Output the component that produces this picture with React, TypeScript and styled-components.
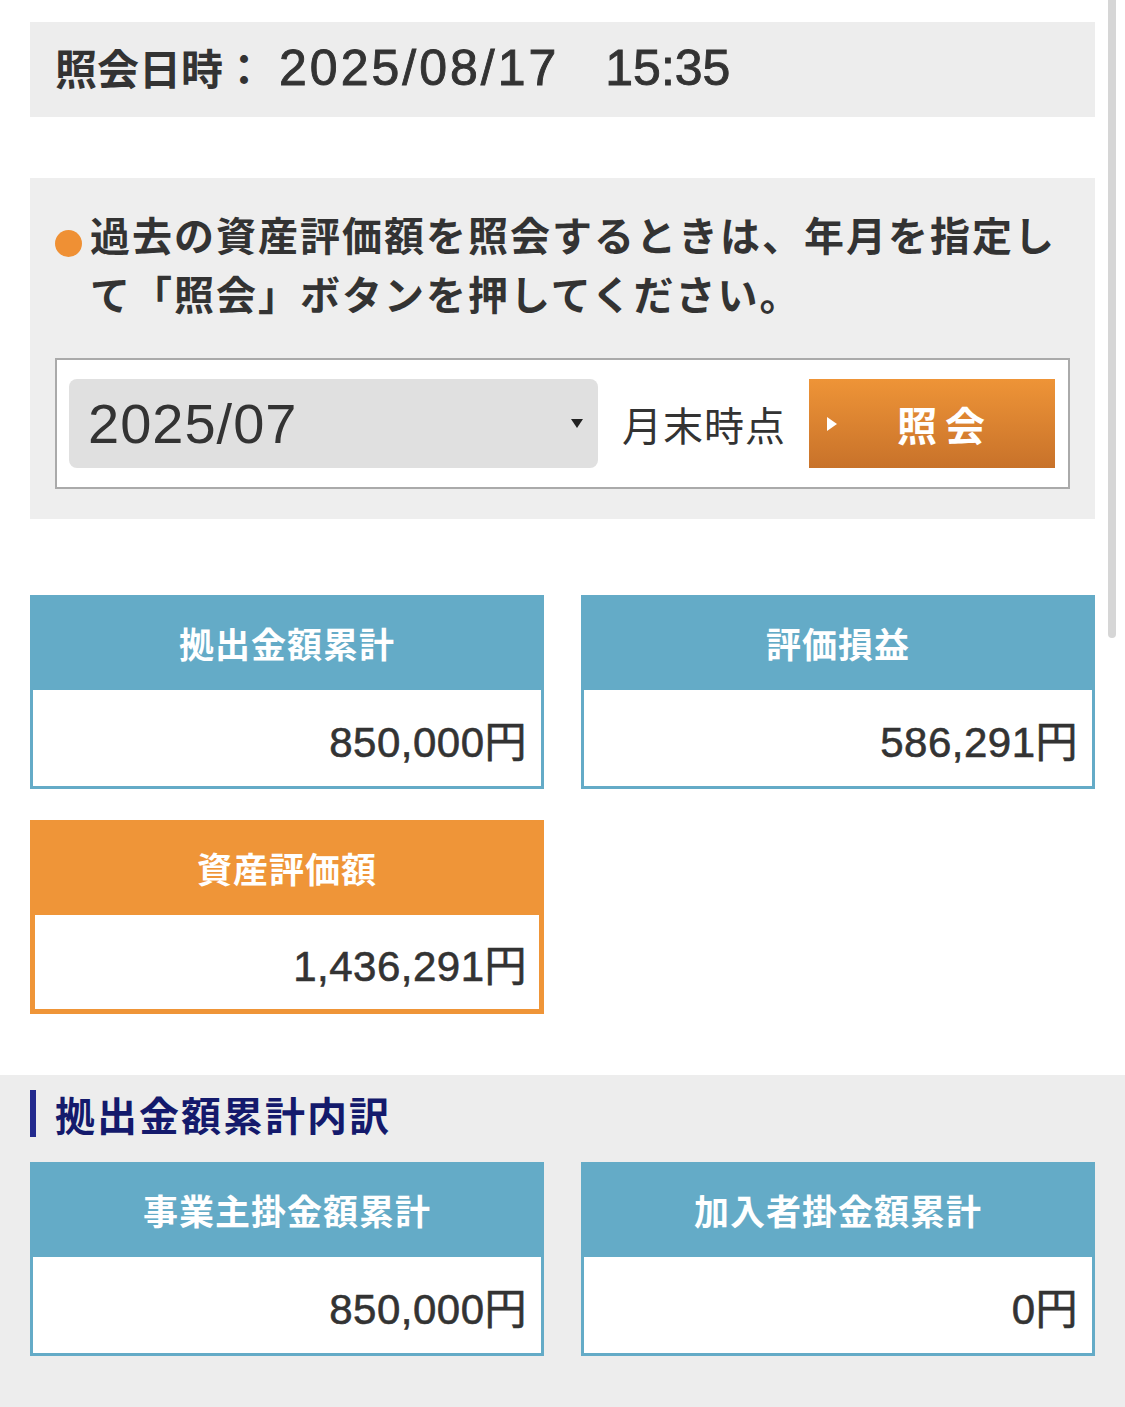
import React, { FC } from 'react';
import styled, { createGlobalStyle } from 'styled-components';

const GlobalStyle = createGlobalStyle`
  body {
    margin: 0;
    background: #fff;
    color: #333;
    font-family: "Liberation Sans", "Noto Sans CJK JP", sans-serif;
  }
`;

const Page = styled.div`
  padding-top: 22px;
`;

const Top = styled.div`
  padding: 0 30px;
`;

const DateBar = styled.div`
  align-items: center;
  background: #ededed;
  display: flex;
  height: 95px;
  padding-left: 25px;
`;

const DateText = styled.div`
  line-height: 1;
  margin-top: -3px;
  white-space: pre;
`;

const DateLabel = styled.span`
  font-size: 42px;
  font-weight: 700;
`;

const DateValue = styled.span<{ $gap?: number; $spacing?: number }>`
  font-size: 50px;
  letter-spacing: ${({ $spacing = 0 }) => $spacing}px;
  margin-left: ${({ $gap = 0 }) => $gap}px;
  -webkit-text-stroke: 0.9px #333;
`;

const Notice = styled.div`
  background: #eeeeee;
  margin-top: 61px;
  padding: 30px 25px 30px;
`;

const NoticeRow = styled.div`
  display: flex;
  align-items: flex-start;
`;

const Bullet = styled.span`
  background: #ef9034;
  border-radius: 50%;
  flex: 0 0 27px;
  height: 27px;
  margin: 22px 8px 0 0;
`;

const NoticeText = styled.p`
  font-size: 40px;
  font-weight: 700;
  letter-spacing: 2px;
  line-height: 59px;
  margin: 0;
`;

const Form = styled.div`
  align-items: center;
  background: #fff;
  border: 2px solid #aaa;
  display: flex;
  margin-top: 32px;
  padding: 19px 13px 19px 12px;
`;

const Select = styled.div`
  align-items: center;
  background: #e0e0e0;
  border-radius: 8px;
  box-sizing: border-box;
  display: flex;
  flex: 0 0 529px;
  font-size: 56px;
  height: 89px;
  justify-content: space-between;
  letter-spacing: 1px;
  padding: 0 15px 0 19px;
`;

const Caret = styled.span`
  border-left: 6px solid transparent;
  border-right: 6px solid transparent;
  border-top: 9px solid #222;
  height: 0;
  width: 0;
`;

const Suffix = styled.span`
  font-size: 40px;
  letter-spacing: 1px;
  margin: 0 23px 0 24px;
  white-space: nowrap;
`;

const Button = styled.button`
  align-items: center;
  background: linear-gradient(#ee9437, #c8722a);
  border: 0;
  color: #fff;
  display: flex;
  flex: 1;
  font-family: inherit;
  font-size: 40px;
  font-weight: 700;
  height: 89px;
  justify-content: center;
  letter-spacing: 8px;
  padding: 0 0 0 26px;
  position: relative;

  &::before {
    border-bottom: 7px solid transparent;
    border-left: 10px solid #fff;
    border-top: 7px solid transparent;
    content: '';
    left: 18px;
    position: absolute;
    top: 38px;
  }
`;

const Grid = styled.div`
  display: grid;
  gap: 31px 37px;
  grid-template-columns: 1fr 1fr;
  margin-top: 76px;
`;

const Card = styled.div<{ $color: string; $border: number }>`
  display: flex;
  flex-direction: column;

  --c: ${({ $color }) => $color};
  --b: ${({ $border }) => $border}px;
`;

const CardHead = styled.div`
  align-items: center;
  background: var(--c);
  color: #fff;
  display: flex;
  font-size: 35px;
  font-weight: 700;
  height: 95px;
  justify-content: center;
  letter-spacing: 1px;
`;

const CardBody = styled.div`
  align-items: center;
  background: #fff;
  border: var(--b) solid var(--c);
  border-top: 0;
  box-sizing: border-box;
  display: flex;
  font-size: 42px;
  height: 99px;
  justify-content: flex-end;
  letter-spacing: 0.5px;
  padding-right: calc(17px - var(--b));
  -webkit-text-stroke: 0.6px #333;
`;

const Section = styled.section`
  background: #ededed;
  margin-top: 61px;
  padding: 15px 30px 51px;
`;

const SectionTitle = styled.h2`
  align-items: center;
  border-left: 6px solid #232a8e;
  color: #141a6c;
  display: flex;
  font-size: 40px;
  font-weight: 700;
  height: 47px;
  letter-spacing: 2px;
  margin: 0;
  padding-left: 19px;
`;

const SectionGrid = styled(Grid)`
  margin-top: 25px;
`;

const Scrollbar = styled.div`
  background: #d6d6d6;
  border-radius: 0 0 4px 4px;
  height: 638px;
  position: fixed;
  right: 9px;
  top: 0;
  width: 8px;
`;

const BLUE = '#64abc7';
const ORANGE = '#ef9538';

type Item = { label: string; value: string; color?: string; border?: number };

const ValueCard: FC<Item> = ({ label, value, color = BLUE, border = 3 }) => (
  <Card $color={color} $border={border}>
    <CardHead>{label}</CardHead>
    <CardBody>{value}</CardBody>
  </Card>
);

const summary: Item[] = [
  { label: '拠出金額累計', value: '850,000円' },
  { label: '評価損益', value: '586,291円' },
  { label: '資産評価額', value: '1,436,291円', color: ORANGE, border: 5 },
];

const breakdown: Item[] = [
  { label: '事業主掛金額累計', value: '850,000円' },
  { label: '加入者掛金額累計', value: '0円' },
];

const App: FC = () => (
  <>
    <GlobalStyle />
    <Page>
      <Top>
        <DateBar>
          <DateText>
            <DateLabel>照会日時：</DateLabel>
            <DateValue $gap={14} $spacing={3}>2025/08/17</DateValue>
            <DateValue $gap={46}>15:35</DateValue>
          </DateText>
        </DateBar>

        <Notice>
          <NoticeRow>
            <Bullet />
            <NoticeText>
              過去の資産評価額を照会するときは、年月を指定して「照会」ボタンを押してください。
            </NoticeText>
          </NoticeRow>

          <Form>
            <Select>
              <span>2025/07</span>
              <Caret />
            </Select>
            <Suffix>月末時点</Suffix>
            <Button type="button">照会</Button>
          </Form>
        </Notice>

        <Grid>
          {summary.map((item) => (
            <ValueCard key={item.label} {...item} />
          ))}
        </Grid>
      </Top>

      <Section>
        <SectionTitle>拠出金額累計内訳</SectionTitle>
        <SectionGrid>
          {breakdown.map((item) => (
            <ValueCard key={item.label} {...item} />
          ))}
        </SectionGrid>
      </Section>
    </Page>
    <Scrollbar />
  </>
);

export default App;
